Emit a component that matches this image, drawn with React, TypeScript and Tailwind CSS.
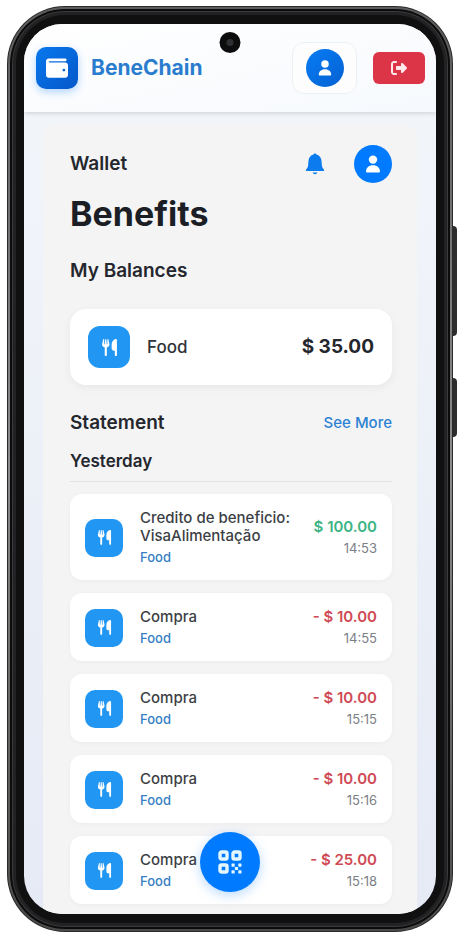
import React from "react";
import { FaRightFromBracket, FaUtensils, FaWallet } from "react-icons/fa6";

type Transaction = {
  title: string;
  category: string;
  amount: string;
  time: string;
  credit?: boolean;
};

const transactions: Transaction[] = [
  { title: "Credito de beneficio: VisaAlimentação", category: "Food", amount: "$ 100.00", time: "14:53", credit: true },
  { title: "Compra", category: "Food", amount: "- $ 10.00", time: "14:55" },
  { title: "Compra", category: "Food", amount: "- $ 10.00", time: "15:15" },
  { title: "Compra", category: "Food", amount: "- $ 10.00", time: "15:16" },
  { title: "Compra", category: "Food", amount: "- $ 25.00", time: "15:18" },
];

function PersonIcon({ size }: { size: number }) {
  return (
    <svg width={size} height={size} viewBox="0 0 16 18" fill="currentColor" aria-hidden="true">
      <circle cx="8" cy="4.6" r="4.2" />
      <path d="M1 16.600C1 12.800 3.800 10.300 8 10.300s7 2.500 7 6.300c0 .5-.3.800-.8.800H1.800c-.5 0-.8-.3-.8-.8Z" />
    </svg>
  );
}

function BellIcon() {
  return (
    <svg width="20" height="22" viewBox="0 0 20 22" fill="currentColor" aria-hidden="true">
      <path d="M10 .4c.8 0 1.400.5 1.500 1.200 2.900.7 4.700 3 5 6.200l.4 4.800c.1 1.500.8 2.700 2 3.900.6.6.4 1.500-.5 1.500H1.600c-.9 0-1.100-.9-.5-1.500 1.200-1.200 1.900-2.400 2-3.900l.4-4.800c.3-3.200 2.100-5.500 5-6.200C8.600.9 9.200.4 10 .4Z" />
      <path d="M7.600 19.600h4.800c-.4 1.100-1.300 1.700-2.400 1.700s-2-.6-2.400-1.700Z" />
    </svg>
  );
}

function QrIcon() {
  return (
    <svg width="24" height="24" viewBox="0 0 24 24" fill="none" aria-hidden="true">
      <g stroke="currentColor" strokeWidth="3.400">
        <rect x="2" y="2" width="7" height="7" rx="1.500" />
        <rect x="15" y="2" width="7" height="7" rx="1.500" />
        <rect x="2" y="15" width="7" height="7" rx="1.500" />
      </g>
      <g fill="currentColor">
        <rect x="13.500" y="13.500" width="3.200" height="3.200" rx=".6" />
        <rect x="20.300" y="13.500" width="3.200" height="3.200" rx=".6" />
        <rect x="16.900" y="16.900" width="3.200" height="3.200" rx=".6" />
        <rect x="13.500" y="20.300" width="3.200" height="3.200" rx=".6" />
        <rect x="20.300" y="20.300" width="3.200" height="3.200" rx=".6" />
      </g>
    </svg>
  );
}

function PhoneFrame({ children }: { children: React.ReactNode }) {
  return (
    <div className="relative">
      <span className="absolute top-[220px] -right-1 h-[110px] w-2 rounded-sm bg-[#2c2c2e]" />
      <span className="absolute top-[372px] -right-1 h-[59px] w-2 rounded-sm bg-[#2c2c2e]" />
      <div className="relative rounded-[58px] bg-[#2a2a2b] p-px">
        <div className="rounded-[57px] bg-linear-to-b from-[#5c5c5c] via-[#8c8c8c] to-[#4c4a49] p-0.5">
          <div className="rounded-[55px] bg-[#0c0c0c] p-0.5">
            <div className="rounded-[53px] bg-[#3a3a3c] p-px">
              <div className="rounded-[52px] bg-[#222224] p-[3px]">
                <div className="rounded-[49px] bg-[#101011] px-2 py-[9px]">{children}</div>
              </div>
            </div>
          </div>
        </div>
      </div>
    </div>
  );
}

function Header() {
  return (
    <header className="relative flex h-[88px] items-center bg-linear-to-br from-white to-[#f6f9fd] pr-[11px] pl-3 shadow-[0_1px_5px_rgba(0,0,0,0.16)]">
      <span className="flex size-[42px] items-center justify-center rounded-[10px] bg-linear-to-br from-[#0878ee] to-[#0558c8] text-white shadow-[0_3px_8px_rgba(0,123,255,0.3)]">
        <FaWallet size={22} />
      </span>
      <span className="ml-[13px] text-[21px] leading-7 font-bold text-[#2a7dce]">BeneChain</span>
      <button
        type="button"
        aria-label="Account"
        className="ml-auto flex h-[52px] w-[65px] items-center justify-center rounded-xl border border-[#edf0f3] bg-[#fdfdfe]"
      >
        <span className="flex size-[38px] items-center justify-center rounded-full bg-linear-to-br from-[#087cf5] to-[#0561d2] text-white">
          <PersonIcon size={16} />
        </span>
      </button>
      <button
        type="button"
        aria-label="Log out"
        className="ml-4 flex h-8 w-[52px] items-center justify-center rounded-md bg-[#dc3548] text-[#ffe9ec]"
      >
        <FaRightFromBracket size={16} />
      </button>
    </header>
  );
}

function TransactionCard({ item }: { item: Transaction }) {
  return (
    <li className="flex items-center rounded-xl bg-white px-[15px] pt-[15px] pb-[14px] shadow-[0_1px_4px_rgba(0,0,0,0.04)]">
      <span className="flex size-[38px] shrink-0 items-center justify-center rounded-[10px] bg-[#2196f3] text-white">
        <FaUtensils size={15} />
      </span>
      <div className="ml-[17px] min-w-0 flex-1">
        <p className="text-[15px] leading-[18px] font-medium text-[#3c3f45]">{item.title}</p>
        <p className="mt-[3px] text-[13px] leading-[18px] font-medium text-[#3580c4]">{item.category}</p>
      </div>
      <div className="ml-4 shrink-0 text-right">
        <p className={`text-[15px] leading-[18px] font-semibold ${item.credit ? "text-[#3db484]" : "text-[#cf4a55]"}`}>
          {item.amount}
        </p>
        <p className="mt-[3px] text-[13px] leading-[18px] text-[#7b8087]">{item.time}</p>
      </div>
    </li>
  );
}

export default function App() {
  return (
    <div className="min-h-screen bg-white pt-1.5 pr-[11px] pb-1.5 pl-[7px] font-[Inter,'Liberation_Sans',sans-serif]">
      <PhoneFrame>
        <div className="relative overflow-hidden rounded-[38px] bg-linear-to-b from-[#f3f6fa] to-[#e6eaf5]">
          <Header />
          <span className="absolute top-2 left-1/2 flex size-[21px] -translate-x-1/2 items-center justify-center rounded-full bg-[#0d0d0e]">
            <span className="size-[7px] rounded-full bg-[#2e3033]" />
          </span>

          <main className="mx-[19px] mt-[13px] rounded-t-xl bg-[#f4f4f5] pt-5 pr-[25px] pb-[10px] pl-[27px] text-[#24272d]">
            <div className="flex items-center">
              <span className="text-[19px] leading-6 font-semibold">Wallet</span>
              <button type="button" aria-label="Notifications" className="mr-[29px] ml-auto text-[#0b7bee]">
                <BellIcon />
              </button>
              <button
                type="button"
                aria-label="Profile"
                className="flex size-[38px] items-center justify-center rounded-full bg-[#007bff] text-white"
              >
                <PersonIcon size={18} />
              </button>
            </div>
            <h1 className="mt-[11px] text-[34px] leading-10 font-bold text-[#1b1e25]">Benefits</h1>

            <h2 className="mt-[25px] text-[19px] leading-6 font-semibold">My Balances</h2>
            <div className="mt-[26px] flex h-[76px] items-center rounded-2xl bg-white px-[18px] shadow-[0_3px_10px_rgba(0,0,0,0.05)]">
              <span className="flex size-[42px] items-center justify-center rounded-xl bg-[#2196f3] text-white">
                <FaUtensils size={17} />
              </span>
              <span className="ml-[17px] text-[17px] leading-6 font-medium text-[#303338]">Food</span>
              <span className="ml-auto text-[19px] leading-6 font-bold">$ 35.00</span>
            </div>

            <div className="mt-[26px] flex items-center justify-between">
              <h2 className="text-[19px] leading-6 font-semibold">Statement</h2>
              <a href="#statement" className="text-[15px] leading-6 font-medium text-[#2c82d4]">
                See More
              </a>
            </div>

            <section id="statement">
              <h3 className="mt-[14px] border-b border-[#e2e3e5] pb-2 text-[17px] leading-6 font-semibold">Yesterday</h3>
              <ul className="mt-3 flex flex-col gap-[13px]">
                {transactions.map((item) => (
                  <TransactionCard key={item.time} item={item} />
                ))}
              </ul>
            </section>
          </main>

          <button
            type="button"
            aria-label="Scan QR code"
            className="absolute bottom-[22px] left-1/2 flex size-[60px] -translate-x-1/2 items-center justify-center rounded-full bg-[#007bff] text-[#e4f7ff] shadow-[0_3px_12px_rgba(0,123,255,0.28)]"
          >
            <QrIcon />
          </button>
        </div>
      </PhoneFrame>
    </div>
  );
}
